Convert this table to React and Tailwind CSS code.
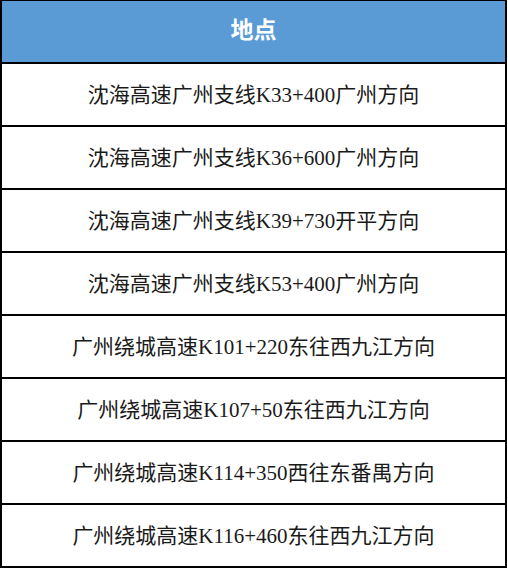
import React from "react";

const rows = [
  "沈海高速广州支线K33+400广州方向",
  "沈海高速广州支线K36+600广州方向",
  "沈海高速广州支线K39+730开平方向",
  "沈海高速广州支线K53+400广州方向",
  "广州绕城高速K101+220东往西九江方向",
  "广州绕城高速K107+50东往西九江方向",
  "广州绕城高速K114+350西往东番禺方向",
  "广州绕城高速K116+460东往西九江方向",
];

export default function App() {
  return (
    <div
      className="w-[508px] h-[568px] bg-white"
      style={{ fontFamily: '"Liberation Serif", "Noto Sans CJK SC", serif' }}
    >
      <div className="w-[507px] border-t border-l-2 border-r-2 border-black flex flex-col">
        <div className="h-[63px] bg-[#5b9bd5] border-b-2 border-black flex items-center justify-center text-white text-[23px] font-bold">
          地点
        </div>
        {rows.map((r, i) => (
          <div
            key={i}
            className="h-[63px] border-b-2 border-black flex items-center justify-center pt-[2px] text-[21px] text-[#1a1a1a]"
          >
            {r}
          </div>
        ))}
      </div>
    </div>
  );
}
